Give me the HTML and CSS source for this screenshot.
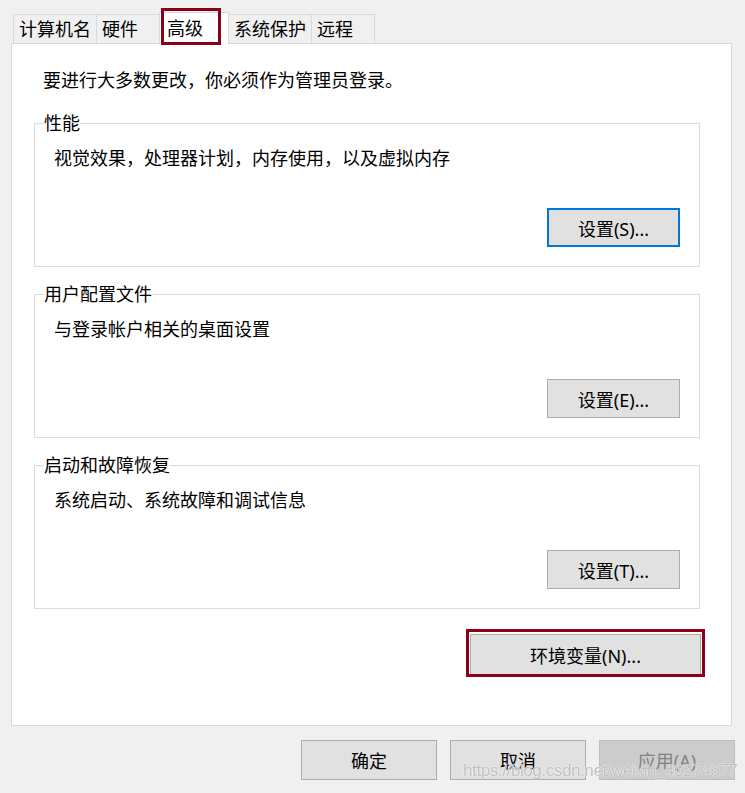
FILE: index.html
```html
<!DOCTYPE html>
<html lang="zh-CN">
<head>
    <meta charset="UTF-8">
    <title>系统属性</title>
    <link rel="stylesheet" href="styles.css">
</head>
<body>
    <div class="dialog">
        <div class="tabs">
            <div class="tab tab-name">计算机名</div>
            <div class="tab tab-hw">硬件</div>
            <div class="tab tab-adv active">高级<span class="mark mark-tab"></span></div>
            <div class="tab tab-prot">系统保护</div>
            <div class="tab tab-remote">远程</div>
        </div>
        <div class="panel">
            <p class="intro">要进行大多数更改，你必须作为管理员登录。</p>

            <fieldset class="group">
                <legend>性能</legend>
                <p class="desc">视觉效果，处理器计划，内存使用，以及虚拟内存</p>
                <button class="btn btn-set focused">设置(S)...</button>
            </fieldset>

            <fieldset class="group">
                <legend>用户配置文件</legend>
                <p class="desc">与登录帐户相关的桌面设置</p>
                <button class="btn btn-set">设置(E)...</button>
            </fieldset>

            <fieldset class="group">
                <legend>启动和故障恢复</legend>
                <p class="desc">系统启动、系统故障和调试信息</p>
                <button class="btn btn-set">设置(T)...</button>
            </fieldset>

            <div class="env-row">
                <button class="btn btn-env">环境变量(N)...<span class="mark mark-env"></span></button>
            </div>
        </div>
        <div class="footer">
            <button class="btn btn-foot">确定</button>
            <button class="btn btn-foot">取消</button>
            <button class="btn btn-foot disabled">应用(A)</button>
            <span class="watermark">https://blog.csdn.net/weixin_40274677</span>
        </div>
    </div>
</body>
</html>
```

FILE: styles.css
```css
body {
    margin: 0;
    background-color: #f0f0f0;
    font-family: "Noto Sans", "Noto Sans CJK SC", sans-serif;
    font-size: 18px;
    color: #000;
}
.dialog {
    position: relative;
    width: 745px;
    height: 793px;
    padding: 14px 0 0 11px;
    box-sizing: border-box;
    overflow: hidden;
}
.tabs {
    display: flex;
    align-items: flex-end;
    height: 29px;
    padding-left: 2px;
}
.tab {
    position: relative;
    height: 29px;
    box-sizing: border-box;
    border: 1px solid #d9d9d9;
    border-bottom: none;
    border-right: none;
    padding-left: 5px;
    line-height: 28px;
    white-space: nowrap;
}
.tab-name { width: 83px; }
.tab-hw { width: 64px; }
.tab-prot { width: 82px; border-left: none; }
.tab-remote { width: 64px; border-right: 1px solid #d9d9d9; }
.tab.active {
    width: 70px;
    height: 32px;
    margin: 0 0 -1px -1px;
    padding-left: 7px;
    background-color: #fff;
    border-right: 1px solid #d9d9d9;
    line-height: 30px;
    z-index: 1;
}
.mark {
    position: absolute;
    border: 3px solid #8b0016;
    pointer-events: none;
}
.mark-tab {
    left: 1px;
    top: -5px;
    width: 54px;
    height: 31px;
}
.panel {
    width: 721px;
    height: 683px;
    box-sizing: border-box;
    background-color: #fff;
    border: 1px solid #d9d9d9;
    padding: 0 31px 0 22px;
}
.intro {
    margin: 25px 0 0 9px;
    line-height: 22px;
}
.group {
    margin: 21px 0 0;
    padding: 0 19px 19px;
    border: 1px solid #dcdcdc;
    min-width: 0;
}
.group + .group {
    margin-top: 16px;
}
.group legend {
    margin-left: -10px;
    padding: 0;
    line-height: 22px;
}
.desc {
    margin: 13px 0 0;
    line-height: 22px;
}
.btn {
    font-family: "Noto Sans", "Noto Sans CJK SC", sans-serif;
    font-size: 18px;
    color: #000;
    background-color: #e1e1e1;
    border: 1px solid #adadad;
    padding: 0;
    box-sizing: border-box;
}
.btn-set {
    display: block;
    margin: 39px 0 0 auto;
    width: 133px;
    height: 39px;
}
.btn-set.focused {
    border: 2px solid #0078d7;
}
.env-row {
    display: flex;
    justify-content: flex-end;
    margin-top: 25px;
}
.btn-env {
    position: relative;
    width: 231px;
    height: 42px;
    margin-right: -1px;
}
.mark-env {
    left: -5px;
    top: -6px;
    width: 233px;
    height: 42px;
}
.footer {
    display: flex;
    justify-content: flex-end;
    gap: 13px;
    padding-right: 10px;
    margin-top: 14px;
}
.btn-foot {
    width: 136px;
    height: 40px;
}
.btn-foot.disabled {
    background-color: #cccccc;
    border-color: #bfbfbf;
    color: #838383;
}
.watermark {
    position: absolute;
    left: 463px;
    top: 761px;
    font-family: "Liberation Sans", sans-serif;
    font-size: 17px;
    letter-spacing: -0.4px;
    color: rgba(175, 175, 175, 0.8);
    text-shadow: 0 0 1px #fff, 0 0 1px #fff;
    white-space: nowrap;
}
```
